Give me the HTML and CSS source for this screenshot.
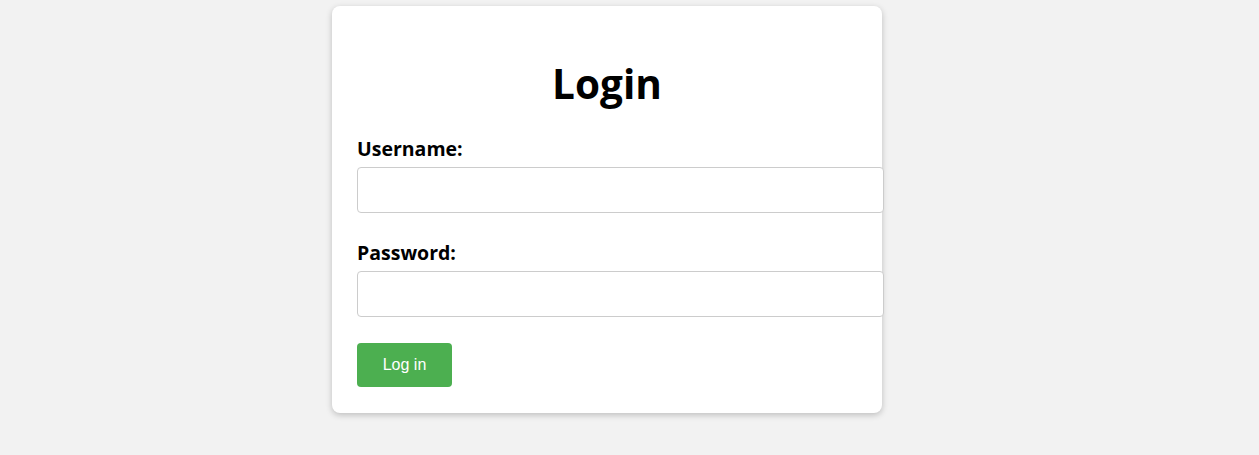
FILE: index.html
```html
<!DOCTYPE html>
<html lang="en">
<head>
<meta charset="utf-8">
<title>Login</title>
<link rel="stylesheet" href="styles.css">
</head>
<body>
<div class="page">
  <div class="card">
    <h1 class="title">Login</h1>
    <form class="form">
      <div class="group">
        <label class="label" for="username">Username:</label>
        <input class="input" type="text" id="username">
      </div>
      <div class="group">
        <label class="label" for="password">Password:</label>
        <input class="input" type="password" id="password">
      </div>
      <button class="btn" type="button">Log in</button>
    </form>
  </div>
</div>
</body>
</html>
```

FILE: styles.css
```css
html, body {
  margin: 0;
  padding: 0;
  background: #f2f2f2;
}
.page {
  display: flex;
  justify-content: center;
  padding: 6px 45px 0 0;
  min-height: 449px;
}
.card {
  width: 500px;
  height: 357px;
  padding: 25px 25px 25px 25px;
  background: #fff;
  border-radius: 8px;
  box-shadow: 0 2px 6px rgba(0, 0, 0, 0.22);
  font-family: "Open Sans", "Noto Sans", sans-serif;
  color: #000;
}
.title {
  margin: 29px 0 0 0;
  font-size: 40.5px;
  line-height: 48px;
  font-weight: 700;
  text-align: center;
}
.form {
  margin: 0;
}
.group {
  margin-top: 30px;
}
.group + .group {
  margin-top: 29px;
}
.label {
  display: block;
  font-size: 19.5px;
  line-height: 22px;
  font-weight: 700;
  margin-bottom: 7px;
}
.input {
  display: block;
  width: calc(100% + 1px);
  box-sizing: content-box;
  padding: 12px;
  border: 1px solid #ccc;
  border-radius: 4px;
  font-size: 16px;
  line-height: 20px;
  height: 20px;
  background: #fff;
  margin: 0;
}
.btn {
  display: block;
  width: 95px;
  margin-top: 26px;
  padding: 12px 0;
  border: none;
  border-radius: 4px;
  background: #4caf50;
  color: #fff;
  font-family: "Liberation Sans", Arial, sans-serif;
  font-size: 16px;
  line-height: 20px;
  text-align: center;
  cursor: pointer;
}
```
